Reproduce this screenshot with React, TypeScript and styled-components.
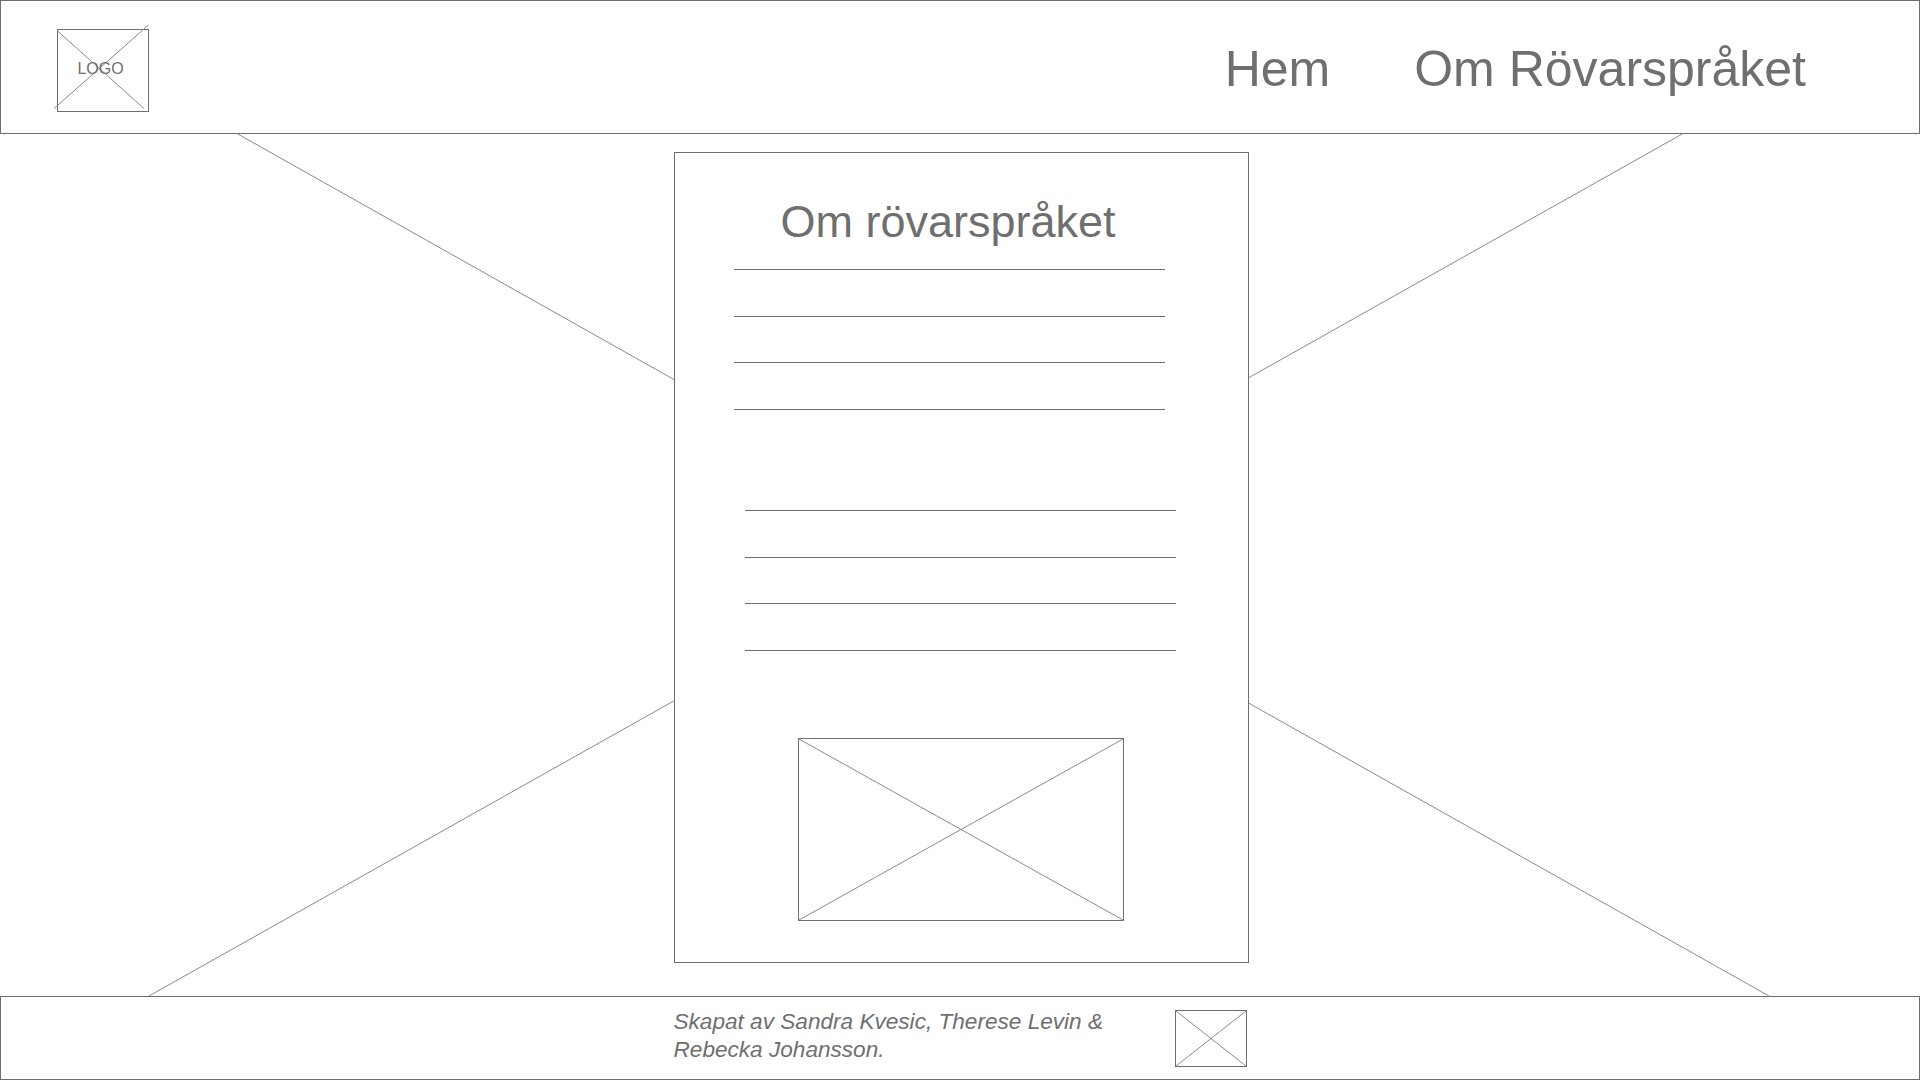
import React from "react";
import styled, { createGlobalStyle } from "styled-components";

const GlobalStyle = createGlobalStyle`
  * { box-sizing: border-box; }
  html, body { margin: 0; padding: 0; background: #ffffff; }
  body {
    font-family: "Liberation Sans", Arial, Helvetica, sans-serif;
    color: #6f6f6f;
  }
`;

const INK = "#6f6f6f";
const THIN = "#8a8a8a";

const Page = styled.div`
  width: 1920px;
  height: 1080px;
  display: flex;
  flex-direction: column;
  overflow: hidden;
`;

const Header = styled.header`
  height: 134px;
  flex: none;
  border: 1px solid ${INK};
  display: flex;
  align-items: flex-start;
  padding: 0 113px 0 56px;
`;

const LogoBox = styled.div`
  position: relative;
  margin-top: 28px;
  width: 92px;
  height: 83px;
  border: 1px solid ${INK};
  display: flex;
  align-items: center;
  justify-content: center;
`;

const LogoText = styled.span`
  position: relative;
  font-size: 16px;
  line-height: 16px;
  color: ${INK};
  margin-left: -5px;
  margin-top: -4px;
`;

const Overlay = styled.svg`
  position: absolute;
  left: 0;
  top: 0;
  overflow: visible;
  pointer-events: none;
`;

const Nav = styled.nav`
  margin-left: auto;
  margin-top: 43px;
  display: flex;
  gap: 84px;
`;

const NavLink = styled.a`
  font-size: 50px;
  line-height: 50px;
  color: ${INK};
  text-decoration: none;
  white-space: nowrap;
`;

const Main = styled.main`
  position: relative;
  flex: 1;
  display: flex;
  justify-content: center;
  align-items: flex-start;
  padding: 18px 0 0 2px;
`;

const Backdrop = styled.svg`
  position: absolute;
  left: 0;
  top: 0;
  width: 1920px;
  height: 862px;
  overflow: visible;
  z-index: 0;
`;

const Card = styled.section`
  position: relative;
  z-index: 1;
  width: 575px;
  height: 811px;
  background: #ffffff;
  border: 1px solid ${INK};
  display: flex;
  flex-direction: column;
  align-items: flex-start;
  padding-top: 46px;
`;

const Title = styled.h1`
  margin: 0 0 0 106px;
  font-size: 45px;
  line-height: 45px;
  font-weight: 400;
  color: ${INK};
  white-space: nowrap;
`;

const LineGroup = styled.div<{ $top: number; $left: number }>`
  margin-top: ${(p) => p.$top}px;
  margin-left: ${(p) => p.$left}px;
  width: 431px;
  display: flex;
  flex-direction: column;
  gap: 45.67px;
`;

const TextLine = styled.div`
  height: 1px;
  background: ${INK};
`;

const ImageBox = styled.div<{ $w: number; $h: number }>`
  position: relative;
  width: ${(p) => p.$w}px;
  height: ${(p) => p.$h}px;
  border: 1px solid ${INK};
  flex: none;
`;

const CardImage = styled(ImageBox)`
  align-self: center;
  margin-top: 87px;
`;

const Footer = styled.footer`
  height: 84px;
  flex: none;
  border: 1px solid ${INK};
  display: flex;
  justify-content: center;
  padding: 11px 0 0 2px;
`;

const FooterInner = styled.div`
  width: 575px;
  display: flex;
  justify-content: space-between;
  align-items: flex-start;
  padding-right: 2px;
`;

const Credits = styled.p`
  margin: 0;
  width: 450px;
  font-size: 22.6px;
  line-height: 28px;
  font-style: italic;
  color: ${INK};
`;

const FooterImage = styled(ImageBox)`
  margin-top: 2px;
`;

const Cross: React.FC<{ w: number; h: number }> = ({ w, h }) => (
  <Overlay width={w} height={h} viewBox={`0 0 ${w} ${h}`}>
    <line x1={0} y1={0} x2={w} y2={h} stroke={THIN} strokeWidth={1} />
    <line x1={w} y1={0} x2={0} y2={h} stroke={THIN} strokeWidth={1} />
  </Overlay>
);

export default function App() {
  return (
    <>
      <GlobalStyle />
      <Page>
        <Header>
          <LogoBox>
            <Overlay width={90} height={81} viewBox="0 0 90 81">
              <line x1={-4} y1={78.5} x2={90.5} y2={-5} stroke={THIN} strokeWidth={1} />
              <line x1={-1} y1={0.5} x2={86} y2={78.5} stroke={THIN} strokeWidth={1} />
            </Overlay>
            <LogoText>LOGO</LogoText>
          </LogoBox>
          <Nav>
            <NavLink href="#">Hem</NavLink>
            <NavLink href="#">Om Rövarspråket</NavLink>
          </Nav>
        </Header>

        <Main>
          <Backdrop viewBox="0 0 1920 862">
            <line x1={236} y1={-1} x2={1769} y2={862} stroke={THIN} strokeWidth={1} />
            <line x1={1684} y1={-1} x2={149} y2={862} stroke={THIN} strokeWidth={1} />
          </Backdrop>
          <Card>
            <Title>Om rövarspråket</Title>
            <LineGroup $top={25} $left={59}>
              <TextLine />
              <TextLine />
              <TextLine />
              <TextLine />
            </LineGroup>
            <LineGroup $top={100} $left={70}>
              <TextLine />
              <TextLine />
              <TextLine />
              <TextLine />
            </LineGroup>
            <CardImage $w={326} $h={183}>
              <Cross w={324} h={181} />
            </CardImage>
          </Card>
        </Main>

        <Footer>
          <FooterInner>
            <Credits>Skapat av Sandra Kvesic, Therese Levin &amp; Rebecka Johansson.</Credits>
            <FooterImage $w={72} $h={57}>
              <Cross w={70} h={55} />
            </FooterImage>
          </FooterInner>
        </Footer>
      </Page>
    </>
  );
}
